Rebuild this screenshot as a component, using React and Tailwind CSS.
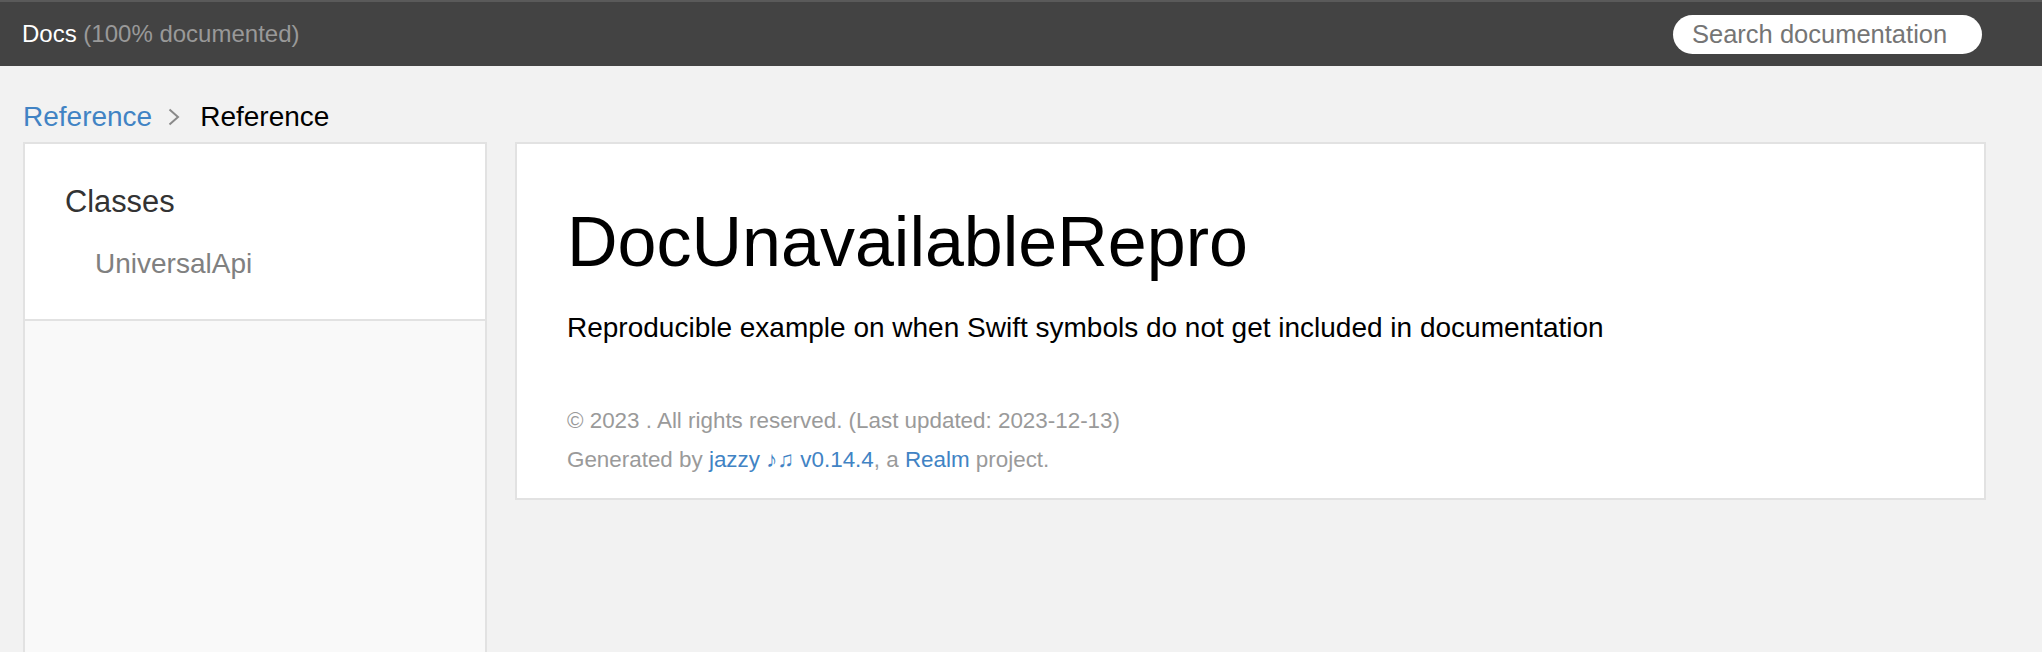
import React from 'react';

const Chevron = () => (
  <svg width="12" height="18" viewBox="0 0 12 18" className="ml-[16px] mr-[20px] shrink-0">
    <path d="M1.5 1.5 L10 9 L1.5 16.5" fill="none" stroke="#8a8a8a" strokeWidth="2" />
  </svg>
);

const App = () => {
  return (
    <div className="min-h-screen bg-[#f2f2f2] font-['Liberation_Sans','DejaVu_Sans',sans-serif] text-[28px] text-black">
      <header className="h-[66px] border-t-2 border-[#5a5a5a] bg-[#434343] flex items-center pl-[22px] pr-[60px]">
        <p className="flex-1 text-[24px] text-[#999]">
          <a href="#" className="text-white">Docs</a> (100% documented)
        </p>
        <input
          type="text"
          placeholder="Search documentation"
          className="w-[309px] h-[39px] rounded-full bg-white pl-[19px] text-[25.5px] text-[#333] placeholder:text-[#757575] outline-none"
        />
      </header>

      <div className="h-[76px] pt-[31px] pl-[23px] flex items-start">
        <div className="flex items-center h-[40px] leading-[40px]">
          <a href="#" className="text-[#4183c4]">Reference</a>
          <Chevron />
          <span className="text-black">Reference</span>
        </div>
      </div>

      <div className="flex items-start gap-[28px] pl-[23px] pr-[56px]">
        <nav className="w-[464px] shrink-0 h-[520px] border-2 border-[#e2e2e2] bg-[#f9f9f9]">
          <ul className="bg-white border-b-2 border-[#e2e2e2] pl-[40px] pt-[36px] pb-[36px]">
            <li>
              <a href="#" className="block text-[30.8px] leading-[43px] text-[#333]">Classes</a>
              <ul className="mt-[21px] pl-[30px]">
                <li>
                  <a href="#" className="block text-[28px] leading-[39px] text-[#808080]">UniversalApi</a>
                </li>
              </ul>
            </li>
          </ul>
        </nav>

        <section className="flex-1 border-2 border-[#e2e2e2] bg-white pl-[50px] pr-[48px] pt-[56px] pb-[23px]">
          <h1 className="text-[70px] leading-[84px] text-black">DocUnavailableRepro</h1>
          <p className="mt-[24px] text-[28px] leading-[39px] text-black">
            Reproducible example on when Swift symbols do not get included in documentation
          </p>
          <div className="mt-[58px] text-[22.4px] leading-[31px] text-[#9a9a9a]">
            <p>© 2023 . All rights reserved. (Last updated: 2023-12-13)</p>
            <p className="mt-[8px]">
              Generated by <a href="#" className="text-[#4183c4]">jazzy ♪♫ v0.14.4</a>, a{' '}
              <a href="#" className="text-[#4183c4]">Realm</a> project.
            </p>
          </div>
        </section>
      </div>
    </div>
  );
};

export default App;
